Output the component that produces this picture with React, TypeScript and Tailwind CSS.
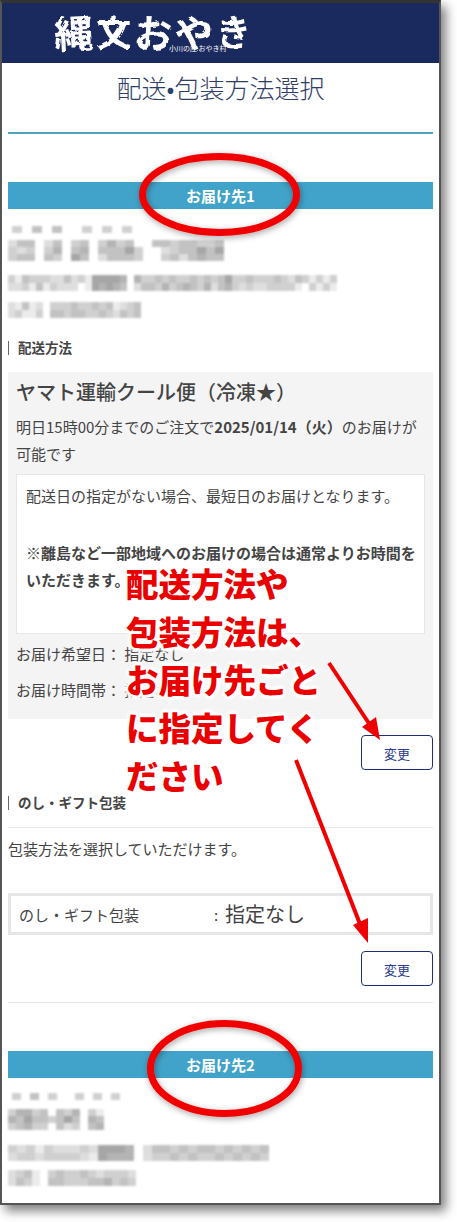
import React from 'react'

const FONT = '[font-family:"Noto_Sans_CJK_JP","Noto_Sans",sans-serif]'

type MosaicProps = {
  rows: string[]
  cell?: number
  height?: number
}

// redacted text in the screenshot: every digit is one block, 0 is blank
const Mosaic = ({ rows, cell = 7, height = 7 }: MosaicProps) => {
  const cols = Math.max(...rows.map((r) => r.length))
  return (
    <svg
      width={cols * cell}
      height={rows.length * height}
      className="block blur-[1px]"
    >
      {rows.map((row, y) =>
        row.split('').map((c, x) => {
          if (c === '0') return null
          const v = 250 - Number(c) * 14
          return (
            <rect
              key={`${x}-${y}`}
              x={x * cell}
              y={y * height}
              width={cell}
              height={height}
              fill={`rgb(${v},${v},${v})`}
            />
          )
        }),
      )}
    </svg>
  )
}

const SectionBar = ({ label }: { label: string }) => (
  <div className="h-[27px] bg-[#41a3c9] flex items-center justify-center text-[15px] leading-none font-bold text-white">
    {label}
  </div>
)

const SectionLabel = ({ label }: { label: string }) => (
  <div className="flex items-center h-[14px] border-l-[1.5px] border-[#666] pl-[9px] text-[13.5px] leading-none font-bold text-[#444]">
    {label}
  </div>
)

const ChangeButton = () => (
  <div className="flex justify-end">
    <button className="w-[72px] h-[35px] rounded-[4px] border border-[#1f2f77] bg-white text-[13px] text-[#2a3a8c] leading-none pt-[2px]">
      変更
    </button>
  </div>
)

const Annotations = () => (
  <>
    <svg width={457} height={1222} className="absolute top-0 left-0 pointer-events-none">
      <defs>
        <filter id="soft" x="-20%" y="-20%" width="140%" height="140%">
          <feDropShadow dx="1" dy="2" stdDeviation="3" floodColor="#000" floodOpacity="0.35" />
        </filter>
      </defs>
      <ellipse cx={219.5} cy={194.5} rx={77} ry={38} fill="none" stroke="#f00000" strokeWidth={7} filter="url(#soft)" />
      <ellipse cx={224.5} cy={1068.5} rx={74} ry={45} fill="none" stroke="#f00000" strokeWidth={7} filter="url(#soft)" />
      <path d="M329 663 L372 728" stroke="#f00000" strokeWidth={4} />
      <path d="M380 740 L362 727 L376 717 Z" fill="#f00000" />
      <path d="M296 760 L360 924" stroke="#f00000" strokeWidth={4} />
      <path d="M368 943 L353 925 L368 918 Z" fill="#f00000" />
    </svg>
    <div className="absolute left-[126px] top-[559px] text-[32.5px] leading-[48px] font-black text-[#ea0000] [text-shadow:3px_0_3px_#fff,-3px_0_3px_#fff,0_3px_3px_#fff,0_-3px_3px_#fff,2px_2px_3px_#fff,-2px_-2px_3px_#fff,2px_-2px_3px_#fff,-2px_2px_3px_#fff]">
      配送方法や
      <br />
      包装方法は、
      <br />
      お届け先ごと
      <br />
      に指定してく
      <br />
      ださい
    </div>
  </>
)

export default function App() {
  return (
    <div className={`relative w-[457px] h-[1222px] bg-white overflow-hidden ${FONT}`}>
      <svg width={0} height={0} className="absolute">
        <filter id="brush">
          <feTurbulence type="fractalNoise" baseFrequency="0.12" numOctaves={2} seed={4} />
          <feDisplacementMap in="SourceGraphic" scale={4} />
        </filter>
      </svg>
      <div className="w-[441px] h-[1205px] bg-white border-x-2 border-b-2 border-t-[3px] border-x-[#555] border-b-[#555] border-t-[#333] shadow-[5px_6px_10px_rgba(0,0,0,0.5)]">
        <header className="relative h-[60px] bg-[#1b2a5e] text-white">
          <div className="absolute left-[52px] top-[6px] flex text-[39px] leading-[44px] font-bold tracking-[1px] whitespace-nowrap [filter:url(#brush)]">
            <span className="-rotate-3">縄</span>
            <span className="scale-90">文</span>
            <span className="rotate-3">お</span>
            <span className="-rotate-6">や</span>
            <span className="scale-90">き</span>
          </div>
          <div className="absolute left-[167px] top-[41px] text-[7px] leading-[9px] whitespace-nowrap">
            小川の庄 おやき村
          </div>
        </header>

        <div className="px-[6px]">
          <h1 className="h-[71px] border-b-2 border-[#4fa3bf] pt-[7px] text-center text-[25px] leading-[34px] font-light text-[#2f3e68]">
            配送•包装方法選択
          </h1>

          <div className="mt-[48px]">
            <SectionBar label="お届け先1" />
          </div>

          <div className="mt-[17px] ml-[4px]">
            <Mosaic rows={['304040030303']} height={7} cell={10} />
          </div>
          <div className="mt-[7px]">
            <Mosaic
              rows={[
                '244024034035340044344334',
                '323035045044463002344646',
                '344043064024443003424544',
              ]}
              cell={9}
            />
          </div>
          <div className="mt-[14px]">
            <Mosaic
              rows={[
                '31433322423166665053343433434346334333432431313',
                '22314132220165654024435345435245323223333103131',
              ]}
              height={8}
            />
          </div>
          <div className="mt-[11px]">
            <Mosaic
              rows={[
                '2141203334334341234',
                '2311304434433432434',
              ]}
              height={8}
            />
          </div>

          <div className="mt-[23px]">
            <SectionLabel label="配送方法" />
          </div>

          <div className="mt-[17px] h-[347px] bg-[#f4f4f4] px-[8px] pt-[6px] text-[15px] leading-[27px] text-[#444]">
            <h2 className="text-[20px] leading-[27px] font-medium">ヤマト運輸クール便（冷凍★）</h2>
            <p className="mt-[8px]">
              明日15時00分までのご注文で<span className="font-bold">2025/01/14（火）</span>のお届けが可能です
            </p>
            <div className="mt-[7px] h-[160px] bg-white border border-[#e6e6e6] pl-[9px] pr-[6px] pt-[7px]">
              <p>配送日の指定がない場合、最短日のお届けとなります。</p>
              <p className="mt-[30px] font-bold">
                ※離島など一部地域へのお届けの場合は通常よりお時間をいただきます。
              </p>
            </div>
            <p className="mt-[6px]">お届け希望日： 指定なし</p>
            <p className="mt-[9px]">お届け時間帯： 指定なし</p>
          </div>

          <div className="mt-[16px]">
            <ChangeButton />
          </div>

          <div className="mt-[26px]">
            <SectionLabel label="のし・ギフト包装" />
          </div>
          <div className="mt-[17px] border-t border-[#e8e8e8] pt-[7px] text-[15px] leading-[27px] text-[#444]">
            包装方法を選択していただけます。
          </div>

          <div className="mt-[31px] h-[42px] border-[3px] border-[#e6e6e6] flex items-center pl-[8px] text-[#444]">
            <span className="w-[195px] text-[15px] leading-none">のし・ギフト包装</span>
            <span className="w-[11px] text-[15px] leading-none">:</span>
            <span className="text-[20px] leading-none">指定なし</span>
          </div>

          <div className="mt-[16px]">
            <ChangeButton />
          </div>

          <div className="mt-[16px] border-t border-[#e8e8e8]" />

          <div className="mt-[48px]">
            <SectionBar label="お届け先2" />
          </div>

          <div className="mt-[15px] ml-[4px]">
            <Mosaic rows={['304030030303']} height={7} cell={9} />
          </div>
          <div className="mt-[9px]">
            <Mosaic
              rows={[
                '3553404350310',
                '5464434640540',
                '3453304230450',
              ]}
              cell={8}
            />
          </div>
          <div className="mt-[15px]">
            <Mosaic
              rows={[
                '32313222326665024434344343434',
                '23323333216555023343433434343',
              ]}
              cell={9}
              height={8}
            />
          </div>
          <div className="mt-[9px]">
            <Mosaic
              rows={[
                '2341034334323332',
                '2431044333445343',
              ]}
              cell={8}
              height={8}
            />
          </div>
        </div>
      </div>
      <Annotations />
    </div>
  )
}
